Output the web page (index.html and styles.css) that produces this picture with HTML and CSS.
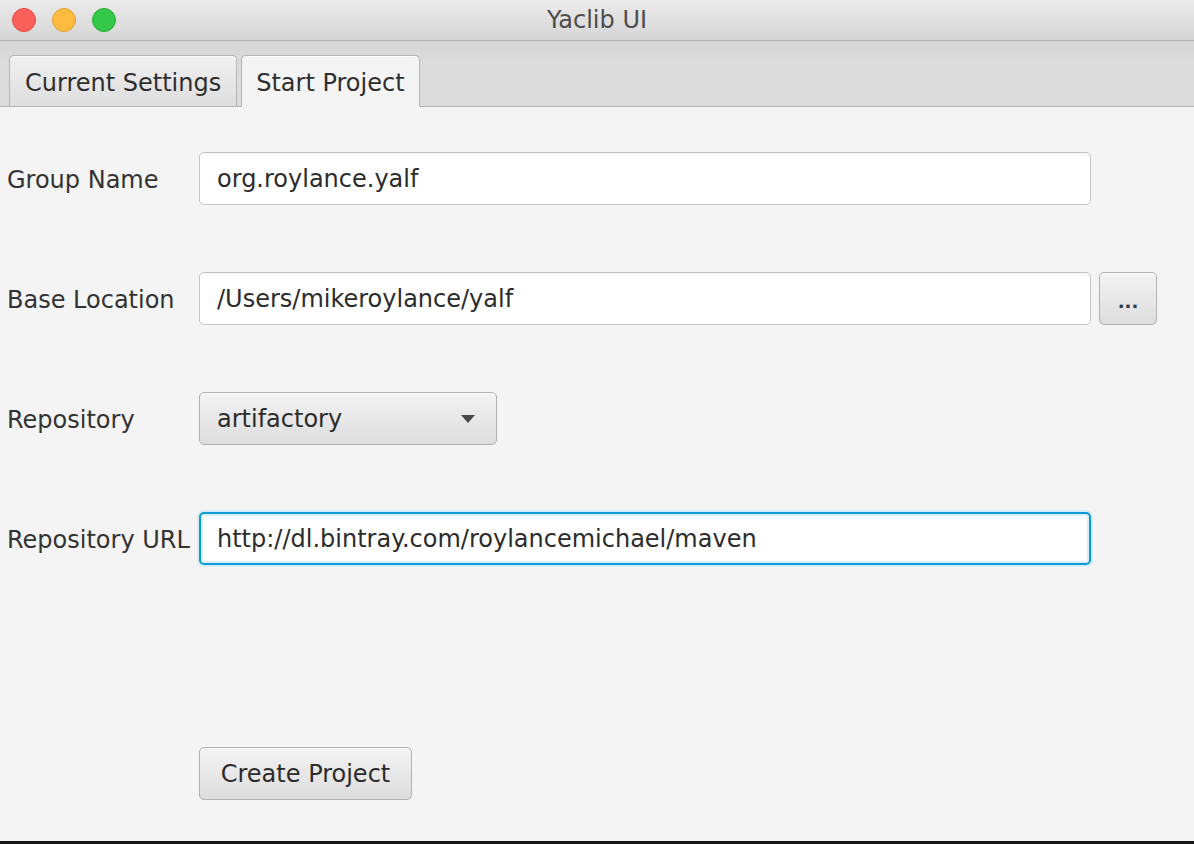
FILE: index.html
```html
<!DOCTYPE html>
<html>
<head>
<meta charset="utf-8">
<title>Yaclib UI</title>
<link rel="stylesheet" href="styles.css">
</head>
<body>
<div class="window">
  <div class="titlebar">
    <div class="lights">
      <span class="light red"></span>
      <span class="light yellow"></span>
      <span class="light green"></span>
    </div>
    <div class="title">Yaclib UI</div>
  </div>
  <div class="tabbar">
    <div class="tab">Current Settings</div>
    <div class="tab selected">Start Project</div>
  </div>
  <div class="content">
    <div class="form">
      <label class="label">Group Name</label>
      <div class="field">org.roylance.yalf</div>
      <div></div>

      <label class="label">Base Location</label>
      <div class="field">/Users/mikeroylance/yalf</div>
      <button class="btn dots">...</button>

      <label class="label">Repository</label>
      <div class="combo-cell">
        <div class="combo"><span>artifactory</span><span class="arrow"></span></div>
      </div>
      <div></div>

      <label class="label">Repository URL</label>
      <div class="field focused">http://dl.bintray.com/roylancemichael/maven</div>
      <div></div>
    </div>
    <div class="actions">
      <button class="btn create">Create Project</button>
    </div>
  </div>
  <div class="bottom-strip"></div>
</div>
</body>
</html>
```

FILE: styles.css
```css
html, body {
  margin: 0;
  padding: 0;
  width: 1194px;
  height: 844px;
  overflow: hidden;
  background: #f4f4f4;
  font-family: "DejaVu Sans", "Liberation Sans", sans-serif;
  color: #333333;
}

.window {
  display: flex;
  flex-direction: column;
  width: 1194px;
  height: 844px;
}

.titlebar {
  height: 40px;
  flex: none;
  display: flex;
  align-items: center;
  position: relative;
  background: linear-gradient(#ebebeb, #d5d5d5);
  border-bottom: 1px solid #b1b1b1;
}

.lights {
  display: flex;
  gap: 16px;
  padding-left: 12px;
}

.light {
  width: 22px;
  height: 22px;
  border-radius: 50%;
  border: 1px solid transparent;
}
.light.red { background: #fc605b; border-color: #de4a44; }
.light.yellow { background: #fdbc40; border-color: #dea034; }
.light.green { background: #34c84a; border-color: #26a934; }

.title {
  position: absolute;
  left: 0;
  right: 0;
  top: 0;
  height: 40px;
  line-height: 40px;
  text-align: center;
  font-size: 24px;
  color: #4d4d4d;
  pointer-events: none;
}

.tabbar {
  height: 51px;
  flex: none;
  display: flex;
  align-items: flex-end;
  gap: 4px;
  padding: 14px 0 0 9px;
  background: linear-gradient(#d6d6d6, #dcdcdc 25px, #dcdcdc);
  border-bottom: 1px solid #b6b6b6;
}

.tab {
  height: 51px;
  box-sizing: border-box;
  padding: 3px 15px 0;
  display: flex;
  align-items: center;
  font-size: 24px;
  color: #2e2e2e;
  border: 1px solid #b4b4b4;
  border-bottom: none;
  border-radius: 5px 5px 0 0;
  background: linear-gradient(#f0f0f0, #dedede);
  box-shadow: inset 0 1px 0 #fafafa;
}

.tab.selected {
  height: 52px;
  margin-bottom: -1px;
  padding: 2px 14px 0;
  background: #f4f4f4;
  box-shadow: inset 0 1px 0 #ffffff;
}

.content {
  flex: 1;
  background: #f4f4f4;
  padding-top: 45px;
  padding-left: 7px;
}

.form {
  display: grid;
  grid-template-columns: 184px 892px 58px;
  column-gap: 8px;
  row-gap: 67px;
  grid-auto-rows: 53px;
  align-items: center;
}

.label {
  font-size: 24px;
  color: #333333;
  white-space: nowrap;
  padding-top: 2px;
}

.field {
  height: 53px;
  box-sizing: border-box;
  border: 1px solid #c4c4c4;
  border-radius: 5px;
  background: linear-gradient(#f7f7f7, #ffffff 5px, #ffffff);
  padding: 1px 17px 0;
  display: flex;
  align-items: center;
  font-size: 24px;
  color: #2c2c2c;
  white-space: nowrap;
  overflow: hidden;
}

.field.focused {
  border: 2px solid #0a9ad4;
  padding-left: 16px;
  box-shadow: 0 0 0 2px #d6ecf6, inset 0 0 0 2px #d9eef8;
  background: #ffffff;
}

.btn {
  height: 53px;
  box-sizing: border-box;
  border: 1px solid #b1b1b1;
  border-radius: 5px;
  background: linear-gradient(#f3f3f3, #dddddd);
  box-shadow: inset 0 1px 0 #fbfbfb;
  font-family: "DejaVu Sans", "Liberation Sans", sans-serif;
  font-size: 24px;
  color: #2c2c2c;
  padding: 0;
  margin: 0;
}

.btn.dots {
  width: 58px;
  font-size: 18px;
  font-weight: bold;
  color: #2b3a4a;
  padding-top: 6px;
}

.combo-cell {
  display: flex;
}

.combo {
  width: 298px;
  height: 53px;
  box-sizing: border-box;
  border: 1px solid #b1b1b1;
  border-radius: 5px;
  background: linear-gradient(#f3f3f3, #dddddd);
  box-shadow: inset 0 1px 0 #fbfbfb;
  display: flex;
  align-items: center;
  justify-content: space-between;
  padding: 1px 21px 0 17px;
  font-size: 24px;
  color: #2c2c2c;
}

.arrow {
  width: 0;
  height: 0;
  border-left: 7px solid transparent;
  border-right: 7px solid transparent;
  border-top: 8px solid #4a4a4a;
}

.actions {
  display: flex;
  padding-left: 192px;
  margin-top: 182px;
}

.btn.create {
  width: 213px;
  padding-top: 1px;
}

.bottom-strip {
  height: 3px;
  flex: none;
  background: #161616;
}
```
